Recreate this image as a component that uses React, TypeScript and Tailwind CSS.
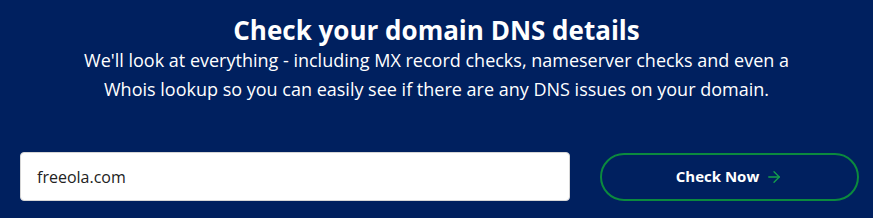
import { ArrowRight } from "lucide-react";

export default function App() {
  return (
    <div className="h-[218px] w-full bg-[#00205f] font-['Open_Sans',sans-serif] text-white">
      <div className="flex flex-col items-center pt-[14px] text-center">
        <h1 className="text-[26px] font-bold leading-[32px]">Check your domain DNS details</h1>
        <p className="text-[18px] leading-[29px]">
          We'll look at everything - including MX record checks, nameserver checks and even a
          <br />
          Whois lookup so you can easily see if there are any DNS issues on your domain.
        </p>
      </div>
      <div className="mt-[48px] flex items-center gap-[30px] px-[20px]">
        <input
          className="h-[49px] w-[550px] shrink-0 rounded-[4px] border border-[#d6d6d6] bg-white px-[16px] text-[16px] text-[#222] outline-none"
          defaultValue="freeola.com"
        />
        <button className="flex h-[48px] w-[259px] shrink-0 items-center justify-center gap-[6px] rounded-full border-2 border-[#0b8a3e] text-[15px] font-bold">
          Check Now
          <ArrowRight className="h-[18px] w-[18px] text-[#13a04b]" strokeWidth={1.75} />
        </button>
      </div>
    </div>
  );
}
